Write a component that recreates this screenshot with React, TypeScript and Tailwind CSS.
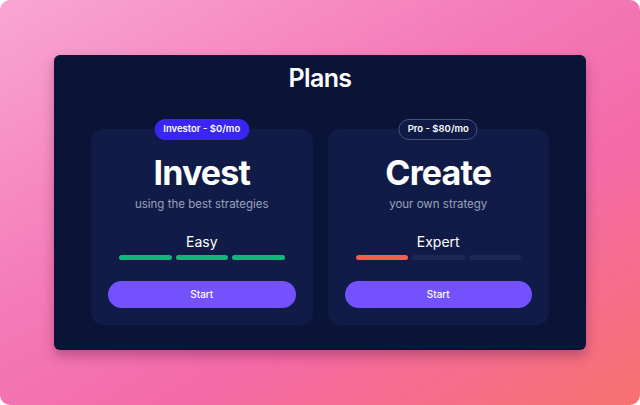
const plans = [
  {
    badge: "Investor - $0/mo",
    badgeClass: "bg-[#3a26f2] border-[#3a26f2]",
    title: "Invest",
    subtitle: "using the best strategies",
    level: "Easy",
    bars: ["bg-[#10b97a]", "bg-[#10b97a]", "bg-[#10b97a]"],
  },
  {
    badge: "Pro - $80/mo",
    badgeClass: "bg-[#0f1a45] border-[#4a5479]",
    title: "Create",
    subtitle: "your own strategy",
    level: "Expert",
    bars: ["bg-[#f0604f]", "bg-[#1c2856]", "bg-[#1c2856]"],
  },
];

const App = () => {
  return (
    <div className="w-[640px] h-[405px] bg-white font-['Inter',sans-serif]">
      <div className="w-full h-full rounded-[10px] bg-[linear-gradient(150deg,#f9a6d3_0%,#f47ab9_40%,#f46aa8_65%,#f6716f_100%)] pt-[55px] px-[54px]">
        <div className="h-[295px] rounded-md bg-[#0a1437] shadow-[0_6px_12px_rgba(80,20,60,0.35)] px-[37px] pt-[8px]">
          <h1 className="text-center text-white text-[25px] font-semibold leading-[30px] tracking-tight">Plans</h1>
          <div className="grid grid-cols-2 gap-[15px] mt-[36px]">
            {plans.map((p) => (
              <div key={p.title} className="relative h-[196px] rounded-xl bg-[#101c47] px-[17px] flex flex-col items-center">
                <div
                  className={`absolute -top-[10px] left-1/2 -translate-x-1/2 h-[21px] px-[8px] rounded-full border text-white text-[9.5px] font-semibold flex items-center whitespace-nowrap ${p.badgeClass}`}
                >
                  {p.badge}
                </div>
                <div className="mt-[24px] text-white text-[34px] font-bold leading-[40px] tracking-tight">{p.title}</div>
                <div className="mt-[3px] text-[#9aa2bd] text-[11.5px] leading-[16px]">{p.subtitle}</div>
                <div className="mt-[21px] text-white text-[14px] leading-[18px]">{p.level}</div>
                <div className="mt-[4px] w-full px-[11px] grid grid-cols-3 gap-[4px]">
                  {p.bars.map((b, i) => (
                    <div key={i} className={`h-[5px] rounded-full ${b}`} />
                  ))}
                </div>
                <button className="mt-[21px] w-full h-[27px] rounded-full bg-[#7351fc] text-white text-[10px] font-medium">
                  Start
                </button>
              </div>
            ))}
          </div>
        </div>
      </div>
    </div>
  );
};

export default App;
